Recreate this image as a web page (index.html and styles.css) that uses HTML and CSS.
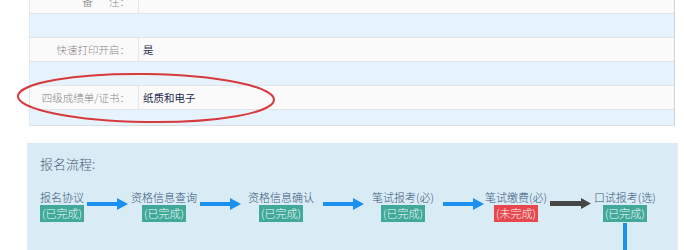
FILE: index.html
```html
<!DOCTYPE html>
<html lang="zh-CN">
<head>
    <meta charset="UTF-8">
    <title>报名信息</title>
    <link rel="stylesheet" href="styles.css">
</head>
<body>

    <div class="info-table">
        <div class="row">
            <div class="label">备&nbsp;&nbsp;&nbsp;&nbsp;&nbsp;&nbsp;&nbsp;注：</div>
            <div class="value"></div>
        </div>
        <div class="spacer"></div>
        <div class="row">
            <div class="label">快速打印开启：</div>
            <div class="value">是</div>
        </div>
        <div class="spacer"></div>
        <div class="row">
            <div class="label">四级成绩单/证书：</div>
            <div class="value">纸质和电子</div>
        </div>
        <div class="spacer last"></div>

        <!-- 圈出证书一行 -->
        <svg class="mark" width="262" height="54" viewBox="0 0 262 54">
            <ellipse cx="131" cy="26" rx="128" ry="24" transform="rotate(0.8 131 26)"/>
        </svg>
    </div>

    <div class="flow-panel">
        <div class="flow-title">报名流程:</div>
        <div class="flow">
            <div class="step">
                <div class="step-name">报名协议</div>
                <div class="badge done">(已完成)</div>
            </div>
            <svg class="arrow" width="41" height="12"><rect x="0" y="4" width="31" height="4"/><polygon points="30,0 41,6 30,12"/></svg>
            <div class="step">
                <div class="step-name">资格信息查询</div>
                <div class="badge done">(已完成)</div>
            </div>
            <svg class="arrow a2" width="41" height="12"><rect x="0" y="4" width="31" height="4"/><polygon points="30,0 41,6 30,12"/></svg>
            <div class="step">
                <div class="step-name">资格信息确认</div>
                <div class="badge done">(已完成)</div>
            </div>
            <svg class="arrow a3" width="41" height="12"><rect x="0" y="4" width="31" height="4"/><polygon points="30,0 41,6 30,12"/></svg>
            <div class="step">
                <div class="step-name">笔试报考(必)</div>
                <div class="badge done">(已完成)</div>
            </div>
            <svg class="arrow a4" width="41" height="12"><rect x="0" y="4" width="31" height="4"/><polygon points="30,0 41,6 30,12"/></svg>
            <div class="step">
                <div class="step-name">笔试缴费(必)</div>
                <div class="badge todo">(未完成)</div>
            </div>
            <svg class="arrow dark" width="41" height="12"><rect x="0" y="3" width="32" height="5"/><polygon points="31,0 41,5.5 31,11"/></svg>
            <div class="step">
                <div class="step-name">口试报考(选)</div>
                <div class="badge done">(已完成)</div>
                <div class="down-line"></div>
            </div>
        </div>
    </div>

</body>
</html>
```

FILE: styles.css
```css
body {
    margin: 0;
    background-color: #fff;
    font-family: "Noto Sans CJK SC", "Microsoft YaHei", sans-serif;
    overflow: hidden;
}

.info-table {
    position: relative;
    margin: -10px 0 0 29px;
    width: 644px;
    border-left: 1px solid #e3e8ec;
    border-right: 1px solid #ccd3d9;
    border-bottom: 1px solid #d8dfe5;
    font-size: 10.5px;
}
.row {
    display: flex;
    height: 23px;
    background-color: #fbfafa;
    border-bottom: 1px solid #dfe5ea;
}
.label {
    width: 100px;
    padding-right: 8px;
    border-right: 1px solid #e2e6ea;
    text-align: right;
    line-height: 23px;
    font-weight: 300;
    color: #858585;
}
.value {
    flex: 1;
    padding-left: 4px;
    line-height: 23px;
    color: #1d2b4f;
}
.spacer {
    height: 23px;
    background-color: #e6f3fd;
    border-bottom: 1px solid #dfe5ea;
}
.spacer.last {
    height: 15px;
    border-bottom: none;
}

.mark {
    position: absolute;
    left: -15px;
    top: 82px;
}
.mark ellipse {
    fill: none;
    stroke: #d8393c;
    stroke-width: 2;
}

.flow-panel {
    margin: 17px 0 0 27px;
    width: 637px;
    height: 120px;
    padding: 12px 0 0 13px;
    background-color: #d9ebf5;
    box-shadow: 1px 0 1px rgba(0, 0, 0, 0.08);
}
.flow-title {
    font-size: 13px;
    line-height: 18px;
    font-weight: 300;
    color: #4a6176;
}
.flow {
    display: flex;
    align-items: flex-start;
    gap: 3px;
    margin-top: 17px;
}
.step {
    display: flex;
    flex-direction: column;
    align-items: center;
}
.step-name {
    font-size: 11px;
    line-height: 15px;
    font-weight: 300;
    color: #36587a;
    white-space: nowrap;
}
.badge {
    height: 17px;
    padding: 0 2px;
    font-size: 11px;
    line-height: 17px;
    font-weight: 300;
    color: #f2faf8;
    white-space: nowrap;
}
.badge.done { background-color: #40a99a; }
.badge.todo { background-color: #e8484d; }

.arrow {
    margin-top: 8px;
    fill: #1b90ee;
}
.arrow.a2 { margin-right: 4px; }
.arrow.a3 { margin-left: 6px; margin-right: 5px; }
.arrow.a4 { margin-left: 6px; margin-right: -2px; }
.arrow.dark { fill: #464646; }

.down-line {
    width: 4px;
    height: 40px;
    margin-top: 1px;
    background-color: #1b90ee;
}
```
